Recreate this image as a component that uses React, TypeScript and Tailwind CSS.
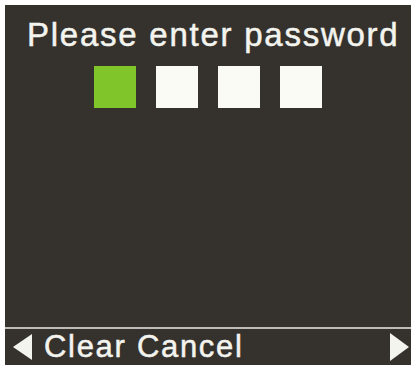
const digits = [true, false, false, false];

export default function App() {
  return (
    <div className="w-[415px] h-[367px] bg-white pt-[5px] pl-[5px] font-[Liberation_Sans,Arial,sans-serif]">
      <div className="w-[406px] h-[360px] bg-[#35322e] flex flex-col">
        <h1 className="pt-[13px] pl-[22px] text-[33px] leading-[33px] tracking-[1.75px] text-[#f4f4ef] whitespace-nowrap [-webkit-text-stroke:0.5px_#f4f4ef]">
          Please enter password
        </h1>
        <div className="mt-[15px] ml-[89px] flex gap-[20px]">
          {digits.map((entered, i) => (
            <div
              key={i}
              className={`w-[42px] h-[42px] ${entered ? "bg-[#80c52a]" : "bg-[#fbfbf6]"}`}
            />
          ))}
        </div>
        <div className="flex-1" />
        <div className="h-[2px] bg-[#bdbcb8]" />
        <div className="h-[36px] flex items-center">
          <svg width="19" height="26" viewBox="0 0 19 26" className="ml-[8px] shrink-0">
            <polygon points="19,0 19,26 0,13" fill="#f4f4ef" />
          </svg>
          <span className="ml-[12px] text-[31px] leading-[36px] tracking-[1.7px] text-[#f4f4ef] whitespace-nowrap [-webkit-text-stroke:0.5px_#f4f4ef]">
            Clear Cancel
          </span>
          <div className="flex-1" />
          <svg width="19" height="28" viewBox="0 0 19 28" className="mr-[2px] shrink-0">
            <polygon points="0,0 0,28 19,14" fill="#f4f4ef" />
          </svg>
        </div>
      </div>
    </div>
  );
}
